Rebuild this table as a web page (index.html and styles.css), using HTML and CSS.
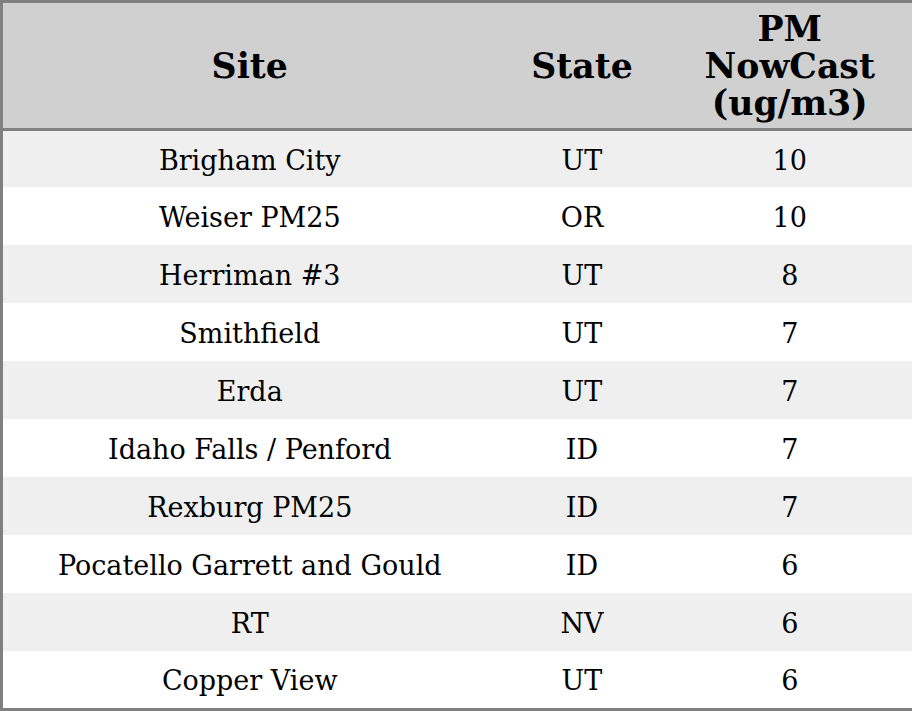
FILE: index.html
```html
<!DOCTYPE html>
<html>
<head>
<meta charset="utf-8">
<link rel="stylesheet" href="styles.css">
</head>
<body>
<table class="aq">
<colgroup><col class="c-site"><col class="c-state"><col class="c-pm"></colgroup>
<thead>
<tr><th>Site</th><th>State</th><th>PM<br>NowCast<br>(ug/m3)</th></tr>
</thead>
<tbody>
<tr><td>Brigham City</td><td>UT</td><td>10</td></tr>
<tr><td>Weiser PM25</td><td>OR</td><td>10</td></tr>
<tr><td>Herriman #3</td><td>UT</td><td>8</td></tr>
<tr><td>Smithfield</td><td>UT</td><td>7</td></tr>
<tr><td>Erda</td><td>UT</td><td>7</td></tr>
<tr><td>Idaho Falls / Penford</td><td>ID</td><td>7</td></tr>
<tr><td>Rexburg PM25</td><td>ID</td><td>7</td></tr>
<tr><td>Pocatello Garrett and Gould</td><td>ID</td><td>6</td></tr>
<tr><td>RT</td><td>NV</td><td>6</td></tr>
<tr><td>Copper View</td><td>UT</td><td>6</td></tr>
</tbody>
</table>
</body>
</html>
```

FILE: styles.css
```css
html, body {
  margin: 0;
  padding: 0;
  background: #ffffff;
}
.aq {
  width: 912px;
  border-collapse: collapse;
  table-layout: fixed;
  border: 3px solid #808080;
  font-family: "DejaVu Serif", serif;
  color: #000;
}
.c-site { width: 495px; }
.c-state { width: 171px; }
.c-pm { width: 246px; }
.aq th {
  background: #d0d0d0;
  font-size: 34.7px;
  font-weight: bold;
  line-height: 37.3px;
  height: 125px;
  padding: 0;
  text-align: center;
  vertical-align: middle;
  border-bottom: 3px solid #808080;
}
.aq td {
  font-size: 27px;
  height: 56px;
  padding: 2px 0 0;
  text-align: center;
  vertical-align: middle;
}
.aq tbody tr:first-child td { height: 54px; }
.aq tbody tr:last-child td { height: 55px; }
.aq tbody tr:nth-child(odd) td { background: #efefef; }
```
